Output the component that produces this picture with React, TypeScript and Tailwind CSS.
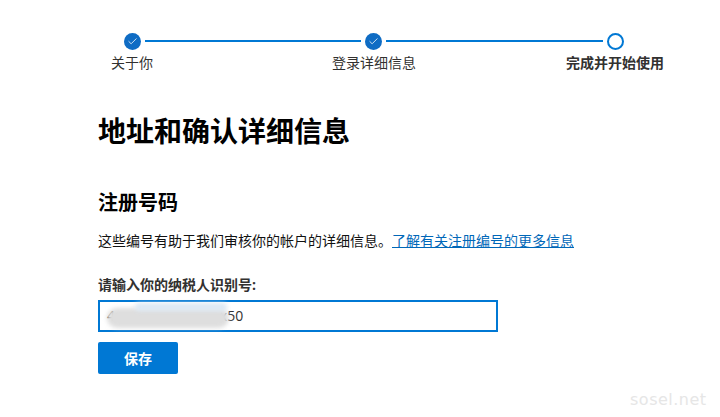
import { Check } from 'lucide-react'

const fontStack = '[font-family:"Open_Sans","Noto_Sans_CJK_SC",sans-serif]'

const DoneStep = () => (
  <span className="flex h-[17px] w-[17px] shrink-0 items-center justify-center rounded-full bg-[#0f6cc4]">
    <Check className="h-[11px] w-[11px] text-[#dbe9f6]" strokeWidth={2} />
  </span>
)

const Line = ({ width }: { width: string }) => (
  <span className={`mb-px h-[2px] shrink-0 bg-[#0078d4] ${width}`} />
)

export default function App() {
  return (
    <div className={`relative h-[417px] w-[720px] overflow-hidden bg-white text-black ${fontStack}`}>
      <div className="flex items-center pl-[124px] pt-[33px]">
        <DoneStep />
        <span className="w-1" />
        <Line width="w-[216px]" />
        <span className="w-1" />
        <DoneStep />
        <span className="w-1" />
        <Line width="w-[217px]" />
        <span className="w-1" />
        <span className="h-[17px] w-[17px] shrink-0 rounded-full border-2 border-[#0078d4]" />
      </div>

      <div className="mt-[2px] flex pl-[72px] text-[14px] leading-[22px] text-[#323130]">
        <span className="w-[120px] text-center">关于你</span>
        <span className="ml-[122px] w-[120px] text-center">登录详细信息</span>
        <span className="ml-[121px] w-[120px] text-center font-bold whitespace-nowrap">完成并开始使用</span>
      </div>

      <div className="pl-[98px]">
        <h1 className="mt-[37px] text-[28px] leading-[40px] font-bold">地址和确认详细信息</h1>
        <h2 className="mt-[38px] text-[20px] leading-[28px] font-bold">注册号码</h2>
        <p className="mt-[14px] text-[14px] leading-[20px] text-[#111]">
          这些编号有助于我们审核你的帐户的详细信息。
          <a href="#" className="text-[#0067b8] underline">了解有关注册编号的更多信息</a>
        </p>
        <label className="mt-[24px] block text-[14px] leading-[20px] font-bold text-[#323130]">
          请输入你的纳税人识别号:
        </label>
        <div className="relative mt-[5px] h-[32px] w-[400px] border-2 border-[#0078d4] px-[7px] text-[14px] leading-[28px] tracking-[0.14px] text-[#323130]">
          4xxxxxxxxxxxxxxx50
          <span className="absolute left-[7px] top-[6px] h-[20px] w-[122px] rounded-full bg-[#dedede] blur-[2px]" />
          <span className="absolute left-[35px] top-[1px] h-[8px] w-[92px] rounded-full bg-[#dde9f4] blur-[2px]" />
        </div>
        <button className="mt-[10px] block h-[32px] w-[80px] rounded-[2px] bg-[#0078d4] text-[14px] font-bold text-white">
          保存
        </button>
      </div>

      <span className="absolute left-[630px] top-[391px] [font-family:'DejaVu_Sans',sans-serif] text-[16px] leading-[18px] tracking-[0.5px] text-[#e6e6e6]">
        sosel.net
      </span>
    </div>
  )
}
